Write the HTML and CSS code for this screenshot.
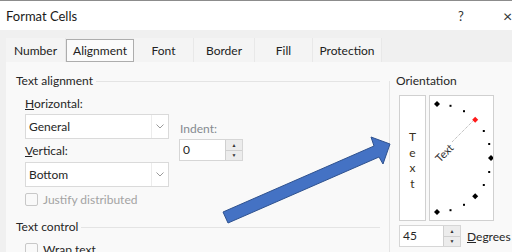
FILE: index.html
```html
<!DOCTYPE html>
<html lang="en">
<head>
  <meta charset="UTF-8">
  <title>Format Cells</title>
  <link rel="stylesheet" href="styles.css">
</head>
<body>
  <div class="window">
    <div class="titlebar">
      <span class="title">Format Cells</span>
      <span class="help">?</span>
      <span class="close">×</span>
    </div>
    <div class="tabs">
      <div class="tab w-number">Number</div>
      <div class="tab active w-align">Alignment</div>
      <div class="tab w-font">Font</div>
      <div class="tab w-border">Border</div>
      <div class="tab w-fill">Fill</div>
      <div class="tab w-prot">Protection</div>
    </div>
    <div class="panel">
      <div class="left">
        <div class="group-title"><span>Text alignment</span><i class="rule"></i></div>
        <div class="fields">
          <div class="align-row">
            <div class="align-col">
              <label class="lbl"><u>H</u>orizontal:</label>
              <div class="select">
                <span class="val">General</span>
                <span class="drop"><svg width="8" height="5" viewBox="0 0 8 5"><polyline points="0.5,0.5 4,4 7.5,0.5" fill="none" stroke="#9a9a9a" stroke-width="1"/></svg></span>
              </div>
              <label class="lbl lbl-vert"><u>V</u>ertical:</label>
              <div class="select select-vert">
                <span class="val">Bottom</span>
                <span class="drop"><svg width="8" height="5" viewBox="0 0 8 5"><polyline points="0.5,0.5 4,4 7.5,0.5" fill="none" stroke="#9a9a9a" stroke-width="1"/></svg></span>
              </div>
            </div>
            <div class="indent-col">
              <label class="lbl muted">Indent:</label>
              <div class="spin spin-indent">
                <span class="val">0</span>
                <span class="spin-btns"><b>&#9650;</b><b>&#9660;</b></span>
              </div>
            </div>
          </div>
          <div class="check disabled"><span class="box"></span>Justify distributed</div>
        </div>
        <div class="group-title second"><span>Text control</span><i class="rule"></i></div>
        <div class="fields">
          <div class="check wrap"><span class="box"></span>Wrap text</div>
        </div>
      </div>

      <div class="orient">
        <div class="orient-title">Orientation</div>
        <div class="orient-boxes">
          <div class="vtext"><span>T</span><span>e</span><span>x</span><span>t</span></div>
          <div class="dial">
            <svg width="63" height="124" viewBox="0 0 63 124">
              <line x1="22" y1="46" x2="44" y2="24" stroke="#a8a8a8" stroke-width="1" stroke-dasharray="1 1"/>
              <text class="dial-text" x="10" y="67" transform="rotate(-45 10 67)">Text</text>
              <g fill="#000">
                <rect x="19.5" y="8.8" width="2" height="2"/>
                <rect x="33" y="14.2" width="2" height="2"/>
                <rect x="52.8" y="34" width="2" height="2"/>
                <rect x="58.2" y="47" width="2" height="2"/>
                <rect x="58.2" y="75" width="2" height="2"/>
                <rect x="52.8" y="88" width="2" height="2"/>
                <rect x="33" y="107.8" width="2" height="2"/>
                <rect x="19.5" y="113.2" width="2" height="2"/>
                <path d="M7 5 L10 8 L7 11 L4 8 Z"/>
                <path d="M61 59 L64 62 L61 65 L58 62 Z"/>
                <path d="M45.2 97.2 L48.2 100.2 L45.2 103.2 L42.2 100.2 Z"/>
                <path d="M7 113 L10 116 L7 119 L4 116 Z"/>
              </g>
              <path d="M45.2 20.8 L48.2 23.8 L45.2 26.8 L42.2 23.8 Z" fill="#ff1a1a"/>
            </svg>
          </div>
        </div>
        <div class="deg-row">
          <div class="spin spin-deg">
            <span class="val">45</span>
            <span class="spin-btns"><b>&#9650;</b><b>&#9660;</b></span>
          </div>
          <span class="deg-label"><u>D</u>egrees</span>
        </div>
      </div>
    </div>
  </div>

  <!-- callout arrow drawn over the dialog -->
  <svg class="arrow" width="512" height="252" viewBox="0 0 512 252">
    <polygon points="223,212 374,146 371,137 390,144 383,164 379,157 228,223" fill="#4472c4" stroke="#2f528f" stroke-width="1" stroke-linejoin="miter"/>
  </svg>
</body>
</html>
```

FILE: styles.css
```css
* {
  box-sizing: border-box;
}
body {
  margin: 0;
  width: 512px;
  height: 252px;
  overflow: hidden;
  position: relative;
  background: #f0f0f0;
  font-family: "Segoe UI", Lato, Arial, sans-serif;
  font-size: 12px;
  color: #262626;
}
.window {
  border-top: 1px solid #8c8c8c;
}
.titlebar {
  height: 29px;
  background: #fff;
  display: flex;
  align-items: center;
  padding-left: 6px;
  font-size: 13px;
  color: #1a1a1a;
}
.title {
  flex: 1;
}
.help {
  flex: none;
  width: 8px;
  margin-right: 37px;
  color: #333;
}
.close {
  flex: none;
  width: 9px;
  font-size: 16px;
  line-height: 16px;
  color: #333;
  white-space: nowrap;
}

/* tab strip */
.tabs {
  display: flex;
  margin: 8px 0 0 6px;
  height: 24px;
}
.tab {
  height: 24px;
  display: flex;
  align-items: center;
  justify-content: center;
  background: #f4f4f4;
  border-right: 1px solid #e8e8e8;
  color: #222;
}
.tab.active {
  margin-top: 1px;
  height: 23px;
  background: #fbfbfb;
  border: 1px solid #adadad;
}
.w-number { width: 60px; }
.w-align { width: 68px; }
.w-font { width: 60px; }
.w-border { width: 61px; }
.w-fill { width: 58px; }
.w-prot { width: 69px; }

/* main page */
.panel {
  display: flex;
  margin-left: 6px;
  height: 190px;
  background: #f9f9f9;
}
.left {
  width: 383px;
  padding: 12px 9px 0 10px;
}
.group-title {
  display: flex;
  align-items: center;
  gap: 3px;
  height: 14px;
  line-height: 14px;
}
.group-title .rule {
  flex: 1;
  height: 1px;
  background: #e4e4e4;
}
.group-title.second {
  margin-top: 14px;
}
.fields {
  padding-left: 9px;
}
.align-row {
  display: flex;
  margin-top: 9px;
}
.align-col {
  width: 144px;
}
.lbl {
  display: block;
  height: 14px;
  line-height: 14px;
}
.lbl-vert {
  margin-top: 5px;
}
.muted {
  color: #858a90;
  padding-left: 1px;
}
.select {
  margin-top: 3px;
  height: 25px;
  display: flex;
  align-items: center;
  background: #fff;
  border: 1px solid #dadada;
}
.select-vert {
  margin-top: 4px;
}
.select .val {
  flex: 1;
  padding-left: 3px;
}
.drop {
  width: 17px;
  height: 100%;
  display: flex;
  align-items: center;
  justify-content: center;
  border-left: 1px solid #ececec;
}
.indent-col {
  margin-left: 10px;
  padding-top: 25px;
}
.spin {
  height: 22px;
  display: flex;
  background: #fff;
  border: 1px solid #d6d6d6;
}
.spin .val {
  flex: 1;
  padding-left: 3px;
  line-height: 20px;
}
.spin-indent {
  width: 64px;
  margin-top: 3px;
}
.spin-deg {
  width: 62px;
}
.spin-btns {
  width: 17px;
  display: flex;
  flex-direction: column;
  border-left: 1px solid #d0d0d0;
}
.spin-btns b {
  flex: 1;
  display: flex;
  align-items: center;
  justify-content: center;
  font-size: 5px;
  font-weight: normal;
  color: #333;
  background: #ececec;
}
.spin-btns b + b {
  border-top: 1px solid #d0d0d0;
}
.check {
  display: flex;
  align-items: center;
  gap: 5px;
  height: 13px;
  margin-top: 6px;
}
.check .box {
  width: 13px;
  height: 13px;
  border: 1px solid #c8c8c8;
  border-radius: 2px;
  background: #f9f9f9;
}
.check.disabled {
  color: #a3a3a3;
}
.check.wrap {
  margin-top: 9px;
}

/* orientation group */
.orient {
  flex: 1;
  margin-top: 19px;
  padding-left: 9px;
  border-left: 1px solid #e4e4e4;
}
.orient-title {
  margin: -7px 0 0 -3px;
  height: 14px;
  line-height: 14px;
}
.orient-boxes {
  display: flex;
  margin-top: 7px;
  height: 126px;
}
.vtext {
  width: 27px;
  padding-top: 4px;
  display: flex;
  flex-direction: column;
  align-items: center;
  justify-content: center;
  background: #fff;
  border: 1px solid #d0d0d0;
  color: #3a3020;
}
.vtext span {
  line-height: 15.5px;
}
.dial {
  width: 65px;
  margin-left: 3px;
  background: #fff;
  border: 1px solid #d0d0d0;
}
.dial svg {
  display: block;
}
.dial-text {
  font-family: "Segoe UI", Lato, Arial, sans-serif;
  font-size: 11px;
  fill: #333;
}
.deg-row {
  display: flex;
  align-items: center;
  margin-top: 4px;
}
.deg-label {
  margin-left: 6px;
}
.arrow {
  position: absolute;
  top: 0;
  left: 0;
  pointer-events: none;
}
```
